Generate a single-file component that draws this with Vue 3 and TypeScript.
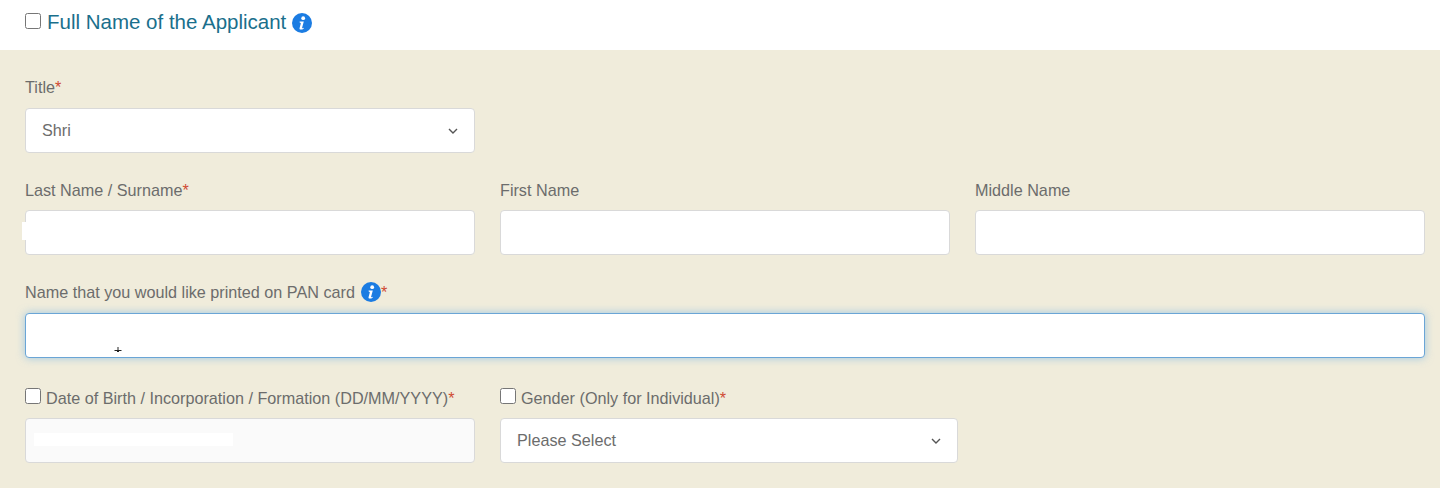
<script setup lang="ts">
import { ref } from "vue";

const title = ref<string>("Shri");
const gender = ref<string>("");
const lastName = ref<string>("");
const firstName = ref<string>("");
const middleName = ref<string>("");
const panName = ref<string>("");
</script>

<template>
  <div class="page">
    <div class="head">
      <input type="checkbox" class="check" />
      <h2>Full Name of the Applicant</h2>
      <svg class="info info-head" viewBox="0 0 20 20"><use href="#info-glyph" /></svg>
    </div>

    <svg class="defs" width="0" height="0">
      <symbol id="info-glyph" viewBox="0 0 20 20">
        <circle cx="10" cy="10" r="10" fill="#1b7ce2" />
        <circle cx="11.2" cy="5.2" r="1.9" fill="#fff" />
        <path d="M7.6 8.6h4.2l-1.7 6.2c-.1.4.2.5.5.4l1-.5.2.7c-1 .8-2 1.200-3 1.200-1 0-1.500-.6-1.200-1.600l1.200-4.600c.1-.5-.1-.7-.6-.7h-.4z" fill="#fff" />
      </symbol>
    </svg>

    <form class="panel">
      <div class="row">
        <div class="field">
          <label>Title<span class="req">*</span></label>
          <div class="select-wrap">
            <select v-model="title" class="control">
              <option>Shri</option>
              <option>Smt</option>
              <option>Kumari</option>
            </select>
            <svg class="chevron" viewBox="0 0 10 6"><path d="M1 1l4 4 4-4" /></svg>
          </div>
        </div>
      </div>

      <div class="row">
        <div class="field">
          <label>Last Name / Surname<span class="req">*</span></label>
          <div class="input-wrap">
            <input v-model="lastName" type="text" class="control" />
            <span class="mask-left"></span>
          </div>
        </div>
        <div class="field">
          <label>First Name</label>
          <input v-model="firstName" type="text" class="control" />
        </div>
        <div class="field">
          <label>Middle Name</label>
          <input v-model="middleName" type="text" class="control" />
        </div>
      </div>

      <div class="row">
        <div class="field wide">
          <label class="with-icon">
            <span>Name that you would like printed on PAN card</span>
            <svg class="info info-label" viewBox="0 0 20 20"><use href="#info-glyph" /></svg>
            <span class="req req-up">*</span>
          </label>
          <div class="input-wrap">
            <input v-model="panName" type="text" class="control focused" />
            <svg class="cursor" viewBox="0 0 8 5"><path d="M4 0v3M0.500 3.500h7M3 4.500h2" /></svg>
          </div>
        </div>
      </div>

      <div class="row row-last">
        <div class="field">
          <label class="with-check">
            <input type="checkbox" class="check" />
            <span>Date of Birth / Incorporation / Formation (DD/MM/YYYY)</span><span class="req">*</span>
          </label>
          <div class="input-wrap">
            <input type="text" class="control disabled" disabled />
            <span class="mask-date"></span>
          </div>
        </div>
        <div class="field gender">
          <label class="with-check">
            <input type="checkbox" class="check" />
            <span>Gender (Only for Individual)</span><span class="req">*</span>
          </label>
          <div class="select-wrap">
            <select v-model="gender" class="control">
              <option value="">Please Select</option>
              <option value="M">Male</option>
              <option value="F">Female</option>
            </select>
            <svg class="chevron" viewBox="0 0 10 6"><path d="M1 1l4 4 4-4" /></svg>
          </div>
        </div>
      </div>
    </form>
  </div>
</template>

<style>
html,
body {
  margin: 0;
  background: #fff;
}
</style>

<style scoped>
.page {
  height: 501px;
  overflow: hidden;
  font-family: "Liberation Sans", Arial, sans-serif;
  color: #6c6c6c;
}

.head {
  height: 50px;
  box-sizing: border-box;
  padding: 8px 25px 0;
  display: flex;
  align-items: flex-start;
}

.head h2 {
  margin: 0 0 0 6px;
  font-size: 20.5px;
  font-weight: 400;
  line-height: 28px;
  color: #1a6f8c;
}

.check {
  width: 16px;
  height: 16px;
  margin: 0;
  flex: none;
}

.head .check {
  margin-top: 5px;
}

.info {
  display: inline-block;
  flex: none;
}

.info-head {
  width: 20px;
  height: 20px;
  margin: 5px 0 0 6px;
}

.defs {
  position: absolute;
}

.panel {
  height: 438px;
  box-sizing: border-box;
  background: #f0ecdb;
  padding: 26.4px 15px 0 25px;
  display: flex;
  flex-direction: column;
}

.row {
  display: flex;
  gap: 25px;
  margin-bottom: 25.8px;
}

.row-last {
  margin-bottom: 0;
}

.field {
  width: 450px;
  display: flex;
  flex-direction: column;
}

.field.wide {
  width: 100%;
}

.field.gender {
  width: 458px;
}

label {
  height: 22px;
  line-height: 22px;
  margin-bottom: 9.6px;
  font-size: 16.2px;
  display: flex;
  align-items: center;
}

.req {
  color: #cf4a33;
}

.req-up {
  align-self: flex-start;
}

.with-icon .info-label {
  width: 20px;
  height: 20px;
  margin-left: 6px;
}

.with-check {
  height: 28px;
  margin-bottom: 6.4px;
}

.with-check .check {
  align-self: flex-start;
  margin: 4px 5px 0 0;
}

.control {
  width: 100%;
  height: 45px;
  box-sizing: border-box;
  border: 1px solid #d9d9d9;
  border-radius: 4px;
  background: #fff;
  padding: 0 16px;
  font: 16.2px "Liberation Sans", Arial, sans-serif;
  color: #6c6c6c;
  outline: none;
  display: block;
}

select.control {
  appearance: none;
}

.control.focused {
  border-color: #6aa5d6;
  box-shadow: 0 0 8px rgba(102, 175, 233, 0.6);
}

.control.disabled {
  background: #fafafa;
}

.select-wrap,
.input-wrap {
  position: relative;
}

.chevron {
  position: absolute;
  right: 17px;
  top: 20px;
  width: 10px;
  height: 6px;
  fill: none;
  stroke: #555;
  stroke-width: 1.400;
  pointer-events: none;
}

.mask-left {
  position: absolute;
  left: -3px;
  top: 12px;
  width: 12px;
  height: 18px;
  background: #fff;
}

.mask-date {
  position: absolute;
  left: 9px;
  top: 15px;
  width: 199px;
  height: 13px;
  background: #fff;
}

.cursor {
  position: absolute;
  left: 89px;
  top: 34px;
  width: 8px;
  height: 5px;
  fill: none;
  stroke: #222;
  stroke-width: 1;
}
</style>
